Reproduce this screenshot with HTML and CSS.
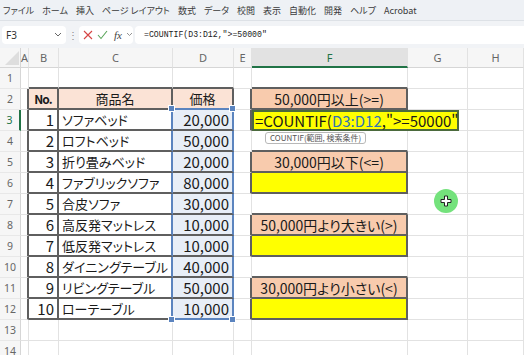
FILE: index.html
```html
<!DOCTYPE html>
<html lang="ja">
<head>
    <meta charset="UTF-8">
    <meta name="viewport" content="width=device-width, initial-scale=1.0">
    <title>COUNTIF - Excel</title>
    <link rel="stylesheet" href="styles.css">
</head>
<body>
    <!-- ribbon tabs -->
    <div class="menu-bar">
        <span>ファイル</span>
        <span>ホーム</span>
        <span>挿入</span>
        <span>ページ レイアウト</span>
        <span>数式</span>
        <span>データ</span>
        <span>校閲</span>
        <span>表示</span>
        <span>自動化</span>
        <span>開発</span>
        <span>ヘルプ</span>
        <span>Acrobat</span>
    </div>

    <!-- name box + formula bar -->
    <div class="formula-bar">
        <div class="name-box">
            <span>F3</span>
            <svg width="8" height="5" viewBox="0 0 8 5"><polyline points="1,1 4,4 7,1" fill="none" stroke="#666" stroke-width="1"/></svg>
        </div>
        <div class="bar-dots">⋮</div>
        <div class="fx-box">
            <svg width="10" height="10" viewBox="0 0 10 10"><path d="M1 1 L9 9 M9 1 L1 9" stroke="#d64545" stroke-width="1.1"/></svg>
            <svg width="11" height="10" viewBox="0 0 11 10"><polyline points="1,5 4,8.5 10,1" fill="none" stroke="#5aa55a" stroke-width="1.1"/></svg>
            <span class="fx">fx</span>
            <svg width="7" height="5" viewBox="0 0 7 5"><polyline points="1,1 3.5,3.5 6,1" fill="none" stroke="#888" stroke-width="0.9"/></svg>
        </div>
        <div class="formula-input">=COUNTIF(D3:D12,"&gt;=50000"</div>
    </div>

    <!-- worksheet -->
    <div class="sheet">
        <div class="corner"><svg width="21" height="20" viewBox="0 0 21 20"><polygon points="19,3 19,17 5,17" fill="#dedede"/></svg></div>
        <div class="ch">A</div>
        <div class="ch">B</div>
        <div class="ch">C</div>
        <div class="ch">D</div>
        <div class="ch">E</div>
        <div class="ch on">F</div>
        <div class="ch">G</div>
        <div class="ch">H</div>

        <!-- row 1 -->
        <div class="rh">1</div>
        <div class="c"></div>
        <div class="c bb"></div>
        <div class="c bb"></div>
        <div class="c bb"></div>
        <div class="c"></div>
        <div class="c bb"></div>
        <div class="c"></div>
        <div class="c"></div>

        <!-- row 2 -->
        <div class="rh">2</div>
        <div class="c br"></div>
        <div class="c hd br bb no">No.</div>
        <div class="c hd br bb">商品名</div>
        <div class="c hd br sb">価格</div>
        <div class="c br"></div>
        <div class="c lb br bb">50,000円以上(&gt;=)</div>
        <div class="c"></div>
        <div class="c"></div>

        <!-- row 3 -->
        <div class="rh on">3</div>
        <div class="c br"></div>
        <div class="c num br bb">1</div>
        <div class="c txt sr bb">ソファベッド</div>
        <div class="c num sel sr bb">20,000
            <span class="handle tl"></span>
            <span class="handle tr"></span>
        </div>
        <div class="c br"></div>
        <div class="c ye br bb active">
            <div class="editor">=COUNTIF(<span class="ref">D3:D12</span>,"&gt;=50000"</div>
            <div class="tip">COUNTIF(範囲, 検索条件)</div>
        </div>
        <div class="c"></div>
        <div class="c"></div>

        <!-- row 4 -->
        <div class="rh">4</div>
        <div class="c br"></div>
        <div class="c num br bb">2</div>
        <div class="c txt sr bb">ロフトベッド</div>
        <div class="c num sel sr bb">50,000</div>
        <div class="c"></div>
        <div class="c bb"></div>
        <div class="c"></div>
        <div class="c"></div>

        <!-- row 5 -->
        <div class="rh">5</div>
        <div class="c br"></div>
        <div class="c num br bb">3</div>
        <div class="c txt sr bb">折り畳みベッド</div>
        <div class="c num sel sr bb">20,000</div>
        <div class="c br"></div>
        <div class="c lb br bb">30,000円以下(&lt;=)</div>
        <div class="c"></div>
        <div class="c"></div>

        <!-- row 6 -->
        <div class="rh">6</div>
        <div class="c br"></div>
        <div class="c num br bb">4</div>
        <div class="c txt sr bb">ファブリックソファ</div>
        <div class="c num sel sr bb">80,000</div>
        <div class="c br"></div>
        <div class="c ye br bb"></div>
        <div class="c"></div>
        <div class="c"></div>

        <!-- row 7 -->
        <div class="rh">7</div>
        <div class="c br"></div>
        <div class="c num br bb">5</div>
        <div class="c txt sr bb">合皮ソファ</div>
        <div class="c num sel sr bb">30,000</div>
        <div class="c"></div>
        <div class="c bb"></div>
        <div class="c"></div>
        <div class="c"></div>

        <!-- row 8 -->
        <div class="rh">8</div>
        <div class="c br"></div>
        <div class="c num br bb">6</div>
        <div class="c txt sr bb">高反発マットレス</div>
        <div class="c num sel sr bb">10,000</div>
        <div class="c br"></div>
        <div class="c lb br bb">50,000円より大きい(&gt;)</div>
        <div class="c"></div>
        <div class="c"></div>

        <!-- row 9 -->
        <div class="rh">9</div>
        <div class="c br"></div>
        <div class="c num br bb">7</div>
        <div class="c txt sr bb">低反発マットレス</div>
        <div class="c num sel sr bb">10,000</div>
        <div class="c br"></div>
        <div class="c ye br bb"></div>
        <div class="c"></div>
        <div class="c"></div>

        <!-- row 10 -->
        <div class="rh">10</div>
        <div class="c br"></div>
        <div class="c num br bb">8</div>
        <div class="c txt sr bb">ダイニングテーブル</div>
        <div class="c num sel sr bb">40,000</div>
        <div class="c"></div>
        <div class="c bb"></div>
        <div class="c"></div>
        <div class="c"></div>

        <!-- row 11 -->
        <div class="rh">11</div>
        <div class="c br"></div>
        <div class="c num br bb">9</div>
        <div class="c txt sr bb">リビングテーブル</div>
        <div class="c num sel sr bb">50,000</div>
        <div class="c br"></div>
        <div class="c lb br bb">30,000円より小さい(&lt;)</div>
        <div class="c"></div>
        <div class="c"></div>

        <!-- row 12 -->
        <div class="rh">12</div>
        <div class="c br"></div>
        <div class="c num br bb">10</div>
        <div class="c txt sr bb">ローテーブル</div>
        <div class="c num sel sr sb">10,000
            <span class="handle bl"></span>
            <span class="handle brh"></span>
        </div>
        <div class="c br"></div>
        <div class="c ye br bb"></div>
        <div class="c"></div>
        <div class="c"></div>

        <!-- row 13 -->
        <div class="rh">13</div>
        <div class="c"></div>
        <div class="c"></div>
        <div class="c"></div>
        <div class="c"></div>
        <div class="c"></div>
        <div class="c"></div>
        <div class="c"></div>
        <div class="c"></div>

        <!-- row 14 -->
        <div class="rh">14</div>
        <div class="c"></div>
        <div class="c"></div>
        <div class="c"></div>
        <div class="c"></div>
        <div class="c"></div>
        <div class="c"></div>
        <div class="c"></div>
        <div class="c"></div>

        <!-- mouse pointer highlight -->
        <div class="cursor">
            <svg width="12" height="12" viewBox="0 0 12 12"><path d="M4.5 1 H7.5 V4.5 H11 V7.5 H7.5 V11 H4.5 V7.5 H1 V4.5 H4.5 Z" fill="#fff" stroke="#222" stroke-width="1"/></svg>
        </div>
    </div>
</body>
</html>
```

FILE: styles.css
```css
body {
    margin: 0;
    width: 524px;
    height: 355px;
    overflow: hidden;
    background-color: #ffffff;
    font-family: "Noto Sans CJK JP", "Noto Sans", sans-serif;
    color: #1a1a1a;
}

/* ribbon tabs */
.menu-bar {
    height: 21px;
    box-sizing: border-box;
    display: flex;
    align-items: center;
    gap: 8px;
    padding-left: 3px;
    background-color: #eef1f5;
    border-bottom: 1px solid #dde1e6;
    font-size: 9px;
    color: #3a3a3a;
    font-feature-settings: "palt";
    white-space: nowrap;
}

/* formula bar */
.formula-bar {
    height: 27px;
    display: flex;
    align-items: center;
    padding-left: 2px;
    background-color: #f1f3f6;
}

.name-box {
    width: 64px;
    height: 18px;
    box-sizing: border-box;
    display: flex;
    align-items: center;
    justify-content: space-between;
    padding: 0 4px;
    background-color: #ffffff;
    border-radius: 4px;
    font-family: "Noto Sans", sans-serif;
    font-size: 10px;
    color: #333333;
}

.bar-dots {
    width: 13px;
    text-align: center;
    font-size: 10px;
    color: #888888;
}

.fx-box {
    width: 54px;
    height: 18px;
    box-sizing: border-box;
    display: flex;
    align-items: center;
    gap: 4px;
    padding-left: 4px;
    background-color: #ffffff;
    border-radius: 4px;
}

.fx {
    font-family: "Liberation Serif", serif;
    font-style: italic;
    font-size: 11px;
    color: #444444;
    margin-left: 2px;
}

.formula-input {
    flex: 1;
    height: 18px;
    margin-left: 2px;
    padding-left: 9px;
    background-color: #ffffff;
    border-radius: 4px 0 0 4px;
    font-family: "Liberation Mono", monospace;
    font-size: 8.2px;
    line-height: 18px;
    color: #222222;
}

/* worksheet grid */
.sheet {
    position: relative;
    display: grid;
    grid-template-columns: 21px 8px 30px 114px 61px 18px 156px 60px 56px;
    grid-template-rows: 20px;
    grid-auto-rows: 21px;
}

.corner {
    background-color: #f6f6f6;
    border-right: 1px solid #d6d6d6;
    border-bottom: 1px solid #d6d6d6;
    box-sizing: border-box;
}

.corner svg {
    display: block;
}

.ch {
    box-sizing: border-box;
    background-color: #f6f6f6;
    border-right: 1px solid #e2e2e2;
    border-bottom: 1px solid #d6d6d6;
    font-family: "Noto Sans", sans-serif;
    font-size: 11px;
    line-height: 19px;
    text-align: center;
    color: #666666;
}

.ch.on {
    background-color: #e2e2e2;
    color: #217346;
    border-bottom: 2px solid #217346;
}

.rh {
    box-sizing: border-box;
    background-color: #f6f6f6;
    border-right: 1px solid #d6d6d6;
    border-bottom: 1px solid #e8e8e8;
    font-family: "Noto Sans", sans-serif;
    font-size: 10.5px;
    line-height: 20px;
    text-align: center;
    color: #666666;
}

.rh.on {
    color: #217346;
    border-right: 2px solid #217346;
}

.c {
    box-sizing: border-box;
    border-right: 1px solid #e2e2e2;
    border-bottom: 1px solid #e2e2e2;
    font-size: 13px;
    line-height: 20px;
    white-space: nowrap;
    font-feature-settings: "palt";
    text-align: center;
}

.num {
    text-align: right;
    padding-right: 3px;
    font-size: 15px;
}

.txt {
    text-align: left;
    padding-left: 3px;
}

.no {
    font-weight: 700;
    font-size: 12px;
    letter-spacing: -1px;
}

.hd {
    background-color: #fbe3d6; /* light peach */
}

.lb {
    background-color: #f8cbad; /* salmon */
    font-size: 14px;
}

.ye {
    background-color: #ffff00;
}

.sel {
    background-color: #e8eef7;
    position: relative;
}

/* dark table borders */
.br {
    border-right: 2px solid #5f5f5f;
}

.bb {
    border-bottom: 2px solid #5f5f5f;
}

/* selection outline */
.sr {
    border-right: 2px solid #5b84bf;
}

.sb {
    border-bottom: 2px solid #5b84bf;
}

.handle {
    position: absolute;
    width: 5px;
    height: 5px;
    background-color: #5b84bf;
    border: 1px solid #ffffff;
}

.handle.tl { left: -5px; top: -5px; }
.handle.tr { right: -4px; top: -5px; }
.handle.bl { left: -5px; bottom: -5px; }
.handle.brh { right: -4px; bottom: -5px; }

/* cell in edit mode */
.active {
    position: relative;
}

.editor {
    position: absolute;
    left: 0;
    top: 0;
    width: 207px;
    height: 21px;
    box-sizing: border-box;
    background-color: #ffff00;
    border: 2px solid #4b6a3d;
    padding-left: 1px;
    font-size: 15px;
    line-height: 17px;
    text-align: left;
    z-index: 2;
}

.editor .ref {
    color: #2f75b5;
}

.tip {
    position: absolute;
    left: 13px;
    top: 22px;
    padding: 0 4px;
    background-color: #ffffff;
    border: 1px solid #b8b8b8;
    border-radius: 3px;
    font-size: 8px;
    line-height: 10px;
    color: #555555;
    z-index: 2;
}

.cursor {
    position: absolute;
    left: 434px;
    top: 141px;
    width: 24px;
    height: 24px;
    border-radius: 50%;
    background-color: #74e27c;
    display: flex;
    align-items: center;
    justify-content: center;
    z-index: 3;
}
```
